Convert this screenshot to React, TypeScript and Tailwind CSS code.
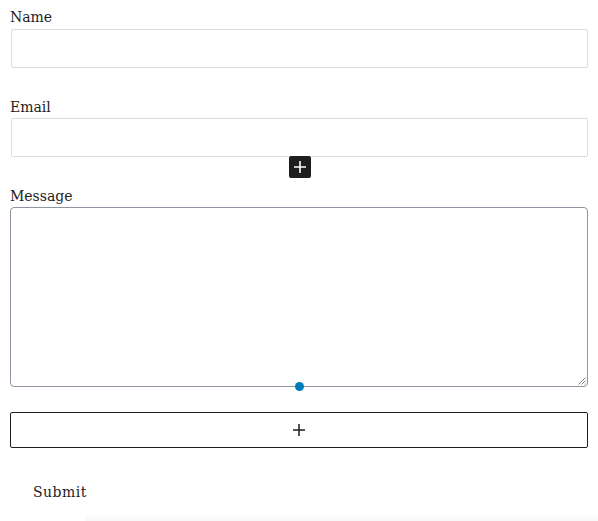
export default function App() {
  return (
    <div className="relative h-[521px] w-[598px] overflow-hidden bg-white font-['DejaVu_Serif',serif] text-[#1e1e1e]">
      <div className="flex flex-col px-[10px] pt-[7px]">
        <label className="text-[14px] leading-[20px]">Name</label>
        <div className="mt-[2px] ml-px h-[39px] rounded-[2px] border border-[#dcdcde]" />

        <label className="mt-[29px] text-[14px] leading-[20px]">Email</label>
        <div className="relative mt-[1px] ml-px h-[39px] rounded-[2px] border border-[#dcdcde]">
          <button className="absolute left-1/2 top-[37px] flex h-[22px] w-[22px] -translate-x-[11px] items-center justify-center rounded-[2px] bg-[#1e1e1e] text-white">
            <svg width="14" height="14" viewBox="0 0 14 14" fill="none" stroke="currentColor" strokeWidth="1.6">
              <path d="M7 1v12M1 7h12" />
            </svg>
          </button>
        </div>

        <label className="mt-[29px] text-[14px] leading-[20px]">Message</label>
        <div className="relative mt-[1px] h-[180px] rounded-[4px] border border-[#8d96a0]">
          <svg className="absolute bottom-[1px] right-[1px]" width="9" height="9" viewBox="0 0 9 9" stroke="#8a8a8a" strokeWidth="1">
            <path d="M8.5 1.5L1.5 8.5M8.5 4.5L4.5 8.5M8.5 7.5L7.5 8.5" />
          </svg>
          <span className="absolute left-1/2 bottom-[-5px] h-[9px] w-[9px] -translate-x-[4px] rounded-full bg-[#007cba]" />
        </div>

        <div className="mt-[25px] flex h-[36px] items-center justify-center rounded-[2px] border border-[#1e1e1e]">
          <svg width="14" height="14" viewBox="0 0 14 14" fill="none" stroke="#1e1e1e" strokeWidth="1.5">
            <path d="M7 1v12M1 7h12" />
          </svg>
        </div>

        <button className="mt-[34px] self-start px-[23px] text-left text-[14px] leading-[20px] tracking-[0.5px]">
          Submit
        </button>
      </div>
      <div className="absolute bottom-0 left-[85px] right-0 h-[8px] bg-gradient-to-b from-white to-[#f7f7f7]" />
    </div>
  );
}
